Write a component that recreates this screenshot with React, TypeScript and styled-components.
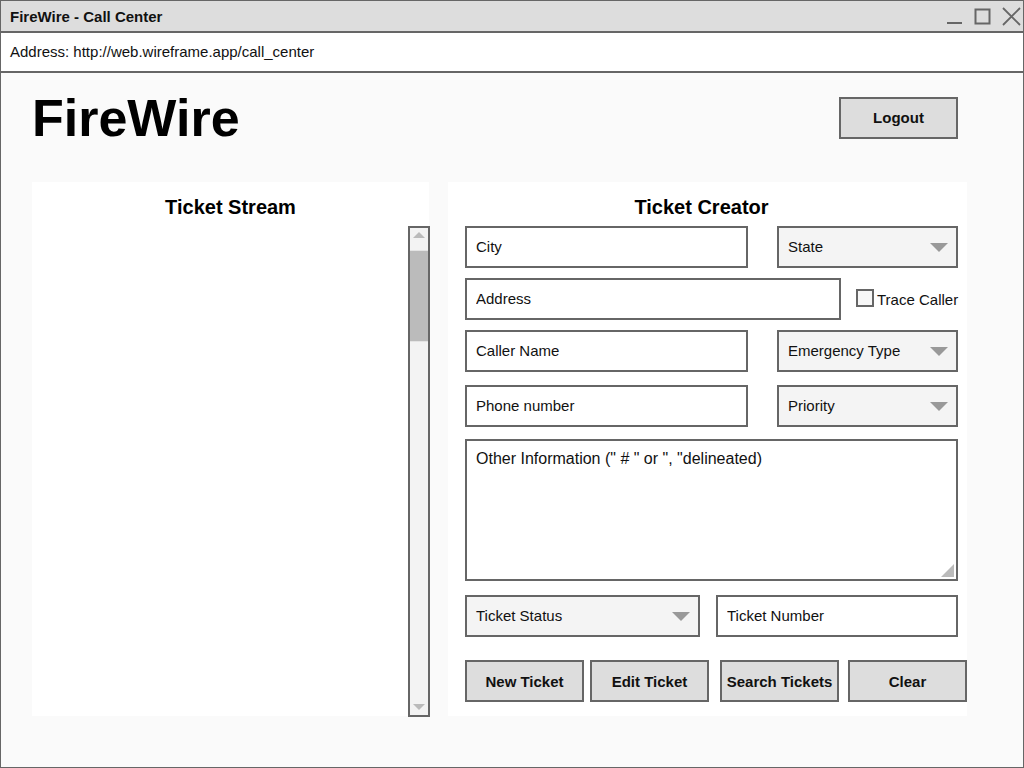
import React from "react";
import styled, { createGlobalStyle } from "styled-components";

const Global = createGlobalStyle`
  html, body { margin: 0; padding: 0; background: #ffffff; }
  body { font-family: "Liberation Sans", Arial, sans-serif; color: #000; }
  * { box-sizing: border-box; }
`;

const Window = styled.div`
  width: 1024px;
  height: 768px;
  border: 1px solid #666;
  background: #fafafa;
  display: flex;
  flex-direction: column;
  overflow: hidden;
`;

const TitleBar = styled.div`
  height: 32px;
  flex: none;
  background: #dddddd;
  border-bottom: 2px solid #666;
  display: flex;
  align-items: center;
  justify-content: space-between;
  padding: 0 2px 0 9px;
`;

const TitleText = styled.div`
  font-size: 15px;
  font-weight: bold;
  color: #111;
`;

const WinControls = styled.div`
  display: flex;
  align-items: center;
  gap: 11px;
  color: #666;
`;

const AddressBar = styled.div`
  height: 40px;
  flex: none;
  background: #fff;
  border-bottom: 2px solid #666;
  display: flex;
  align-items: center;
  padding: 0 9px 1px;
  font-size: 15px;
  color: #111;
`;

const Header = styled.div`
  display: flex;
  justify-content: space-between;
  align-items: flex-start;
  padding: 19px 65px 0 31px;
`;

const Heading = styled.h1`
  margin: 0;
  font-size: 52px;
  line-height: 52px;
  font-weight: bold;
  color: #000;
`;

const Button = styled.button`
  width: 119px;
  height: 42px;
  flex: none;
  background: #dddddd;
  border: 2px solid #666;
  border-radius: 0;
  font-family: "Liberation Sans", Arial, sans-serif;
  font-size: 15px;
  font-weight: bold;
  color: #111;
  padding: 0;
`;

const LogoutButton = styled(Button)`
  margin-top: 5px;
  padding-bottom: 2px;
`;

const Panels = styled.div`
  display: flex;
  gap: 19px;
  margin-top: 38px;
  padding-left: 31px;
`;

const Panel = styled.div<{ $w: number }>`
  width: ${(p) => p.$w}px;
  height: 534px;
  background: #fff;
  display: flex;
  flex-direction: column;
  padding-top: 13px;
`;

const PanelTitle = styled.div<{ $shift?: number }>`
  font-size: 20px;
  line-height: 24px;
  font-weight: bold;
  text-align: center;
  padding-right: ${(p) => p.$shift ?? 0}px;
  color: #000;
`;

const StreamBody = styled.div`
  flex: 1;
  display: flex;
  justify-content: flex-end;
  margin-top: 7px;
  margin-right: -1px;
  margin-bottom: -1px;
`;

const Scrollbar = styled.div`
  width: 22px;
  border: 2px solid #666;
  background: #f3f3f3;
  display: flex;
  flex-direction: column;
`;

const ScrollArrow = styled.div<{ $down?: boolean }>`
  height: 22px;
  flex: none;
  display: flex;
  align-items: ${(p) => (p.$down ? "flex-end" : "flex-start")};
  justify-content: center;
  padding: ${(p) => (p.$down ? "0 0 5px" : "4px 0 0")};
  &::before {
    content: "";
    width: 0;
    height: 0;
    border-left: 6px solid transparent;
    border-right: 6px solid transparent;
    ${(p) => (p.$down ? "border-top: 6px solid #bbb;" : "border-bottom: 6px solid #bbb;")}
  }
`;

const ScrollThumb = styled.div`
  height: 92px;
  flex: none;
  background: #bbbbbb;
  border-top: 1px solid #e4e4e4;
  border-bottom: 1px solid #e4e4e4;
`;

const ScrollTrack = styled.div`
  flex: 1;
`;

const CreatorBody = styled.div`
  display: flex;
  flex-direction: column;
  padding-left: 17px;
`;

const Row = styled.div<{ $top: number; $gap?: number }>`
  display: flex;
  align-items: center;
  margin-top: ${(p) => p.$top}px;
  gap: ${(p) => p.$gap ?? 0}px;
`;

const TextInput = styled.input<{ $w: number }>`
  width: ${(p) => p.$w}px;
  height: 42px;
  flex: none;
  border: 2px solid #666;
  border-radius: 0;
  background: #fff;
  padding: 0 9px 2px;
  font-family: "Liberation Sans", Arial, sans-serif;
  font-size: 15px;
  color: #111;
  outline: none;
  &::placeholder {
    color: #111;
    opacity: 1;
  }
`;

const Select = styled.div<{ $w: number }>`
  width: ${(p) => p.$w}px;
  height: 42px;
  flex: none;
  border: 2px solid #666;
  background: #f4f4f4;
  display: flex;
  align-items: center;
  justify-content: space-between;
  padding: 0 8px 2px 9px;
  font-size: 15px;
  color: #111;
`;

const Caret = styled.span`
  width: 0;
  height: 0;
  border-left: 9px solid transparent;
  border-right: 9px solid transparent;
  border-top: 9px solid #999;
  margin-top: 2px;
`;

const CheckLabel = styled.label`
  display: flex;
  align-items: center;
  gap: 3px;
  margin-left: 15px;
  font-size: 15px;
  color: #111;
  white-space: nowrap;
`;

const CheckBox = styled.span`
  width: 18px;
  height: 18px;
  border: 2px solid #666;
  background: #f7f7f7;
  display: inline-block;
  margin-top: -2px;
`;

const AreaWrap = styled.div`
  position: relative;
  width: 493px;
  height: 142px;
  margin-top: 12px;
`;

const TextArea = styled.textarea`
  width: 100%;
  height: 100%;
  border: 2px solid #666;
  border-radius: 0;
  background: #fff;
  resize: none;
  padding: 9px 9px;
  font-family: "Liberation Sans", Arial, sans-serif;
  font-size: 16px;
  line-height: 18px;
  color: #111;
  outline: none;
  &::placeholder {
    color: #111;
    opacity: 1;
  }
`;

const ResizeGrip = styled.span`
  position: absolute;
  right: 4px;
  bottom: 4px;
  width: 0;
  height: 0;
  border-left: 13px solid transparent;
  border-bottom: 13px solid #bbb;
`;

const Icon = styled.svg`
  display: block;
`;

const ActionButton = styled(Button)<{ $left?: number }>`
  margin-left: ${(p) => p.$left ?? 0}px;
`;

export default function App() {
  return (
    <>
      <Global />
      <Window>
        <TitleBar>
          <TitleText>FireWire - Call Center</TitleText>
          <WinControls>
            <Icon width="17" height="17" viewBox="0 0 17 17">
              <line x1="1" y1="15" x2="16" y2="15" stroke="#666" strokeWidth="2" />
            </Icon>
            <Icon width="17" height="17" viewBox="0 0 17 17">
              <rect x="1.5" y="1.5" width="14" height="14" fill="none" stroke="#666" strokeWidth="2" />
            </Icon>
            <Icon width="19" height="19" viewBox="0 0 19 19">
              <path d="M1 1 L18 18 M18 1 L1 18" stroke="#666" strokeWidth="1.8" fill="none" />
            </Icon>
          </WinControls>
        </TitleBar>
        <AddressBar>Address: http://web.wireframe.app/call_center</AddressBar>
        <Header>
          <Heading>FireWire</Heading>
          <LogoutButton>Logout</LogoutButton>
        </Header>
        <Panels>
          <Panel $w={397}>
            <PanelTitle>Ticket Stream</PanelTitle>
            <StreamBody>
              <Scrollbar>
                <ScrollArrow />
                <ScrollThumb />
                <ScrollTrack />
                <ScrollArrow $down />
              </Scrollbar>
            </StreamBody>
          </Panel>
          <Panel $w={519}>
            <PanelTitle $shift={12}>Ticket Creator</PanelTitle>
            <CreatorBody>
              <Row $top={7} $gap={29}>
                <TextInput $w={283} placeholder="City" />
                <Select $w={181}>
                  State
                  <Caret />
                </Select>
              </Row>
              <Row $top={10}>
                <TextInput $w={376} placeholder="Address" />
                <CheckLabel>
                  <CheckBox />
                  Trace Caller
                </CheckLabel>
              </Row>
              <Row $top={10} $gap={29}>
                <TextInput $w={283} placeholder="Caller Name" />
                <Select $w={181}>
                  Emergency Type
                  <Caret />
                </Select>
              </Row>
              <Row $top={13} $gap={29}>
                <TextInput $w={283} placeholder="Phone number" />
                <Select $w={181}>
                  Priority
                  <Caret />
                </Select>
              </Row>
              <AreaWrap>
                <TextArea placeholder={'Other Information (" # " or ", "delineated)'} />
                <ResizeGrip />
              </AreaWrap>
              <Row $top={14} $gap={16}>
                <Select $w={235}>
                  Ticket Status
                  <Caret />
                </Select>
                <TextInput $w={242} placeholder="Ticket Number" />
              </Row>
              <Row $top={23}>
                <ActionButton>New Ticket</ActionButton>
                <ActionButton $left={6}>Edit Ticket</ActionButton>
                <ActionButton $left={11}>Search Tickets</ActionButton>
                <ActionButton $left={9}>Clear</ActionButton>
              </Row>
            </CreatorBody>
          </Panel>
        </Panels>
      </Window>
    </>
  );
}
